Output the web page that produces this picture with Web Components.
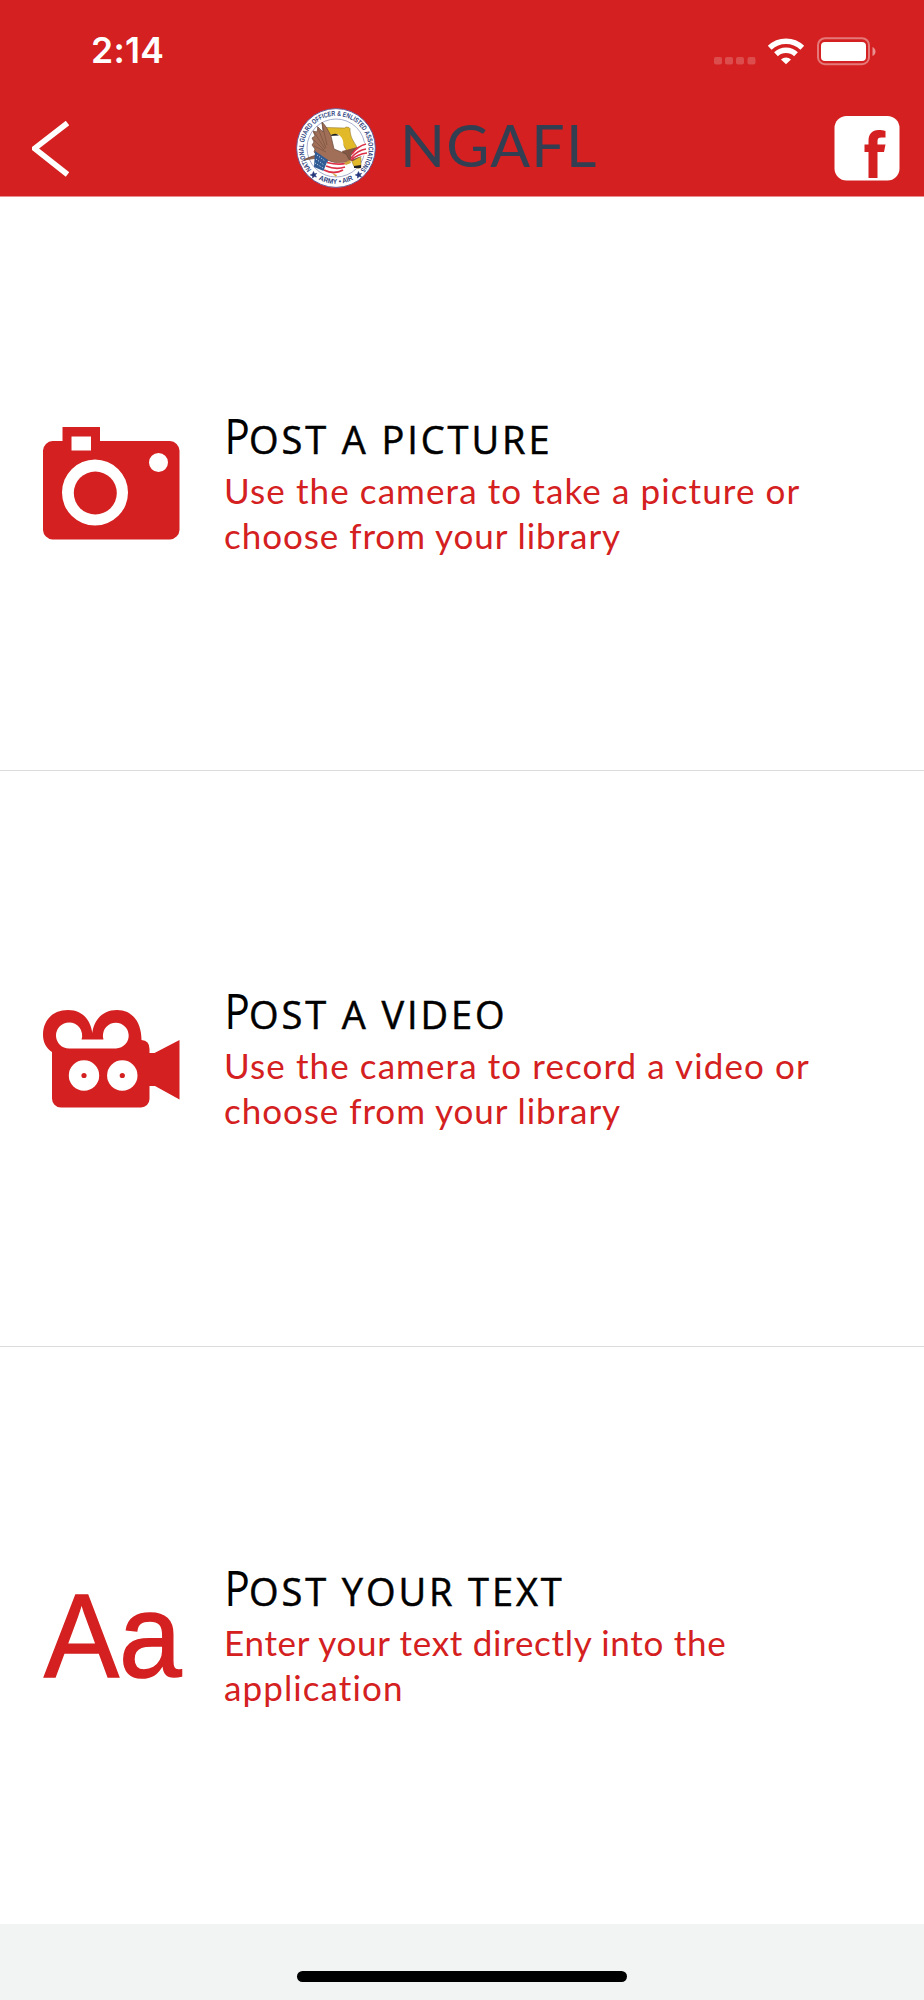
<!DOCTYPE html>
<html lang="en">
<head>
<meta charset="utf-8">
<title>NGAFL</title>
<style>
    body {
        margin: 0;
        background: #fff;
    }
</style>
</head>
<body>
<post-screen></post-screen>

<script>
const RED = '#d42020';

class BaseElement extends HTMLElement {
    connectedCallback() {
        this.root = this.attachShadow({ mode: 'open' });
        this.root.innerHTML = this.constructor.template;
    }
}

class StatusBar extends BaseElement {
    static get tagName() {
        return 'status-bar';
    }

    static get template() {
        return `
<style>
    :host {
        display: flex;
        justify-content: space-between;
        align-items: center;
        height: 101px;
        padding: 0 48px 0 91px;
        box-sizing: border-box;
        color: #fff;
        font: 600 35.500px/40px Inter, 'Liberation Sans', sans-serif;
        letter-spacing: .3px;
    }
    svg {
        display: block;
    }
</style>
<span>2:14</span>
<svg width="164" height="30" viewBox="712 35 164 30" fill="#fff">
    <g opacity=".2">
        <rect x="714" y="56" width="8" height="7.5" rx="2"/>
        <rect x="725" y="56" width="8" height="7.5" rx="2"/>
        <rect x="736" y="56" width="8" height="7.5" rx="2"/>
        <rect x="747.5" y="56" width="8" height="7.5" rx="2"/>
    </g>
    <g fill="none" stroke="#fff" stroke-width="5.4">
        <path d="M769.7 46.800a23.400 23.400 0 0 1 32.600 0"/>
        <path d="M776 53.300a14.500 14.500 0 0 1 20 0"/>
    </g>
    <path d="M781 58.500a7.600 7.600 0 0 1 10 0l-5 4.800z"/>
    <rect x="818" y="37.200" width="51" height="26" rx="7" fill="none" stroke="#fff" stroke-width="2" opacity=".4"/>
    <rect x="821" y="41" width="45" height="19" rx="4"/>
    <path d="M872.500 46q3 1.500 3 4.500t-3 4.500z" opacity=".5"/>
</svg>
`;
    }
}

class GuardSeal extends BaseElement {
    static get tagName() {
        return 'guard-seal';
    }

    static get template() {
        return `
<style>
    :host {
        display: block;
        width: 80px;
        height: 80px;
    }
    svg {
        display: block;
    }
    text {
        font-family: 'Liberation Sans Narrow', 'Liberation Sans', sans-serif;
        font-weight: bold;
        font-size: 7px;
        fill: #2e3f80;
    }
</style>
<svg width="80" height="80" viewBox="0 0 80 80">
    <defs>
        <path id="top" d="M15.600 61.500A32.400 32.400 0 1 1 65 61"/>
        <path id="bottom" d="M16 67A36.800 36.800 0 0 0 64 67"/>
    </defs>
    <circle cx="40" cy="40" r="39.400" fill="#fff" stroke="#6a5a96" stroke-width="1"/>
    <circle cx="40" cy="40" r="29" fill="#fff" stroke="#9098c0" stroke-width=".8"/>
    <text><textPath href="#top" textLength="148" lengthAdjust="spacingAndGlyphs">NATIONAL GUARD OFFICER &amp; ENLISTED ASSOCIATIONS</textPath></text>
    <text><textPath href="#bottom" startOffset="50%" text-anchor="middle" textLength="36" lengthAdjust="spacingAndGlyphs">ARMY • AIR</textPath></text>
    <path d="M29 20.500l1.500-1 18 .5 1.500-1 3 .5 1 1c0 8 3 12 6 17l5 13v9l-3 1-4-2-5-12-6-10-5-8-11-3z" fill="#e2b929" stroke="#806a28" stroke-width=".5"/>
    <path d="M36 28c4-5 10 0 11 5l1 9-6 5-6-10z" fill="#fff"/>
    <path d="M34 28q5-4 9-.5l-5 .3z" fill="#222"/>
    <path d="M46 43l8-2 15-4 1 9-13 7-8-1z" fill="#815643"/>
    <path d="M26 14c4 4 6 8 9 14l3 13 12 5 4 7-11 3-12-4-9-2-14 2c5-3 9-4 13-5l-3-3 1-3-3-4 2-3-2-4 3-2-2-5 4 1 1-5 5 5z" fill="#a16f57" stroke="#67483b" stroke-width=".7"/>
    <path d="M26 15l5 22M21 18l9 22M18 24l11 17M18 32l10 10M18 38l12 6M9 51l16-4" stroke="#765041" stroke-width=".7" fill="none"/>
    <path d="M19 43l13 9-2 12-12-5z" fill="#305b94"/>
    <path d="M21 47l8 6M20 51l8 6M19 55l8 5" stroke="#d9e6f4" stroke-width="1" stroke-dasharray="1 1.700"/>
    <path d="M31 54q12 2 21 0l-4 9q-11 5-21 1z" fill="#fff"/>
    <path d="M31 54.500q12 3 20 .5M30 58q10 4 19 1M28 62q10 5 19 0" stroke="#dc3047" stroke-width="1.800" fill="none"/>
    <path d="M55 48q6-10 15-14l1 13q-7 1-16 5z" fill="#fff"/>
    <path d="M56 46q6-8 14-10M55 50q7-8 15-9M55 52q7-6 16-7" stroke="#dc3047" stroke-width="1.700" fill="none"/>
    <path d="M36 65l5 2-1 2zM48 55l6-3 1 3-5 2z" fill="#d0a63a"/>
    <path d="M58 58l7-1v3h-7z" fill="#222"/>
    <path id="star" d="M17.500 63.500l1 2.200 2.300-.4-1.500 1.800 1.200 2-2.300-.6-1.600 1.700-.2-2.300-2.200-1 2.200-.9z" fill="#26387c" stroke="#26387c" stroke-width=".5"/>
    <use href="#star" x="45"/>
</svg>
`;
    }
}

class NavBar extends BaseElement {
    static get tagName() {
        return 'nav-bar';
    }

    static get template() {
        return `
<style>
    :host {
        display: flex;
        align-items: flex-start;
        height: 95px;
        padding: 7px 24px 0 32px;
        box-sizing: border-box;
    }
    svg {
        display: block;
    }
    .back {
        margin-top: 13px;
    }
    .brand {
        display: flex;
        flex: 1;
        gap: 24px;
        margin-left: 227px;
    }
    .name {
        margin-top: 2px;
        white-space: nowrap;
        color: #323e52;
        font: 400 59px/70px Lato, sans-serif;
        letter-spacing: 1.200px;
    }
    .share {
        margin-top: 8px;
    }
</style>
<svg class="back" width="37" height="56" viewBox="0 0 37 56">
    <path d="M35.500 2L2.500 27.500l33 26" fill="none" stroke="#fff" stroke-width="5.600"/>
</svg>
<div class="brand">
    <guard-seal></guard-seal>
    <span class="name">NGAFL</span>
</div>
<svg class="share" width="66" height="65" viewBox="0 0 66 65">
    <rect x=".5" width="65" height="64.500" rx="12" fill="#fff"/>
    <path d="M34.500 62V36h-4v-7.500h4V25c0-7 3.500-11 10-11 2.500 0 5 .3 7 1v6.500h-4c-3 0-4 1-4 3.500v3.500h8L50 36h-6.500v26z" fill="${RED}"/>
</svg>
`;
    }
}

class PostOption extends BaseElement {
    static get tagName() {
        return 'post-option';
    }

    static get template() {
        return `
<style>
    :host {
        display: flex;
        align-items: center;
        padding-left: 43px;
        box-sizing: border-box;
    }
    .icon {
        width: 137px;
        margin-right: 44px;
    }
    .title {
        margin-bottom: 4px;
        white-space: nowrap;
        color: #000;
        font: 400 49px/50px 'Open Sans', sans-serif;
    }
    .text {
        white-space: nowrap;
        color: ${RED};
        font: 400 35px/44.700px Lato, sans-serif;
        letter-spacing: 1.1px;
    }
</style>
<div class="icon"><slot name="icon"></slot></div>
<div>
    <div class="title"><slot name="title"></slot></div>
    <div class="text"><slot></slot></div>
</div>
`;
    }
}

class HomeIndicator extends BaseElement {
    static get tagName() {
        return 'home-indicator';
    }

    static get template() {
        return `
<style>
    :host {
        display: flex;
        justify-content: center;
        height: 76px;
        padding-top: 47px;
        box-sizing: border-box;
        background: #f2f4f4;
    }
    div {
        width: 330px;
        height: 11px;
        border-radius: 6px;
        background: #000;
    }
</style>
<div></div>
`;
    }
}

class PostScreen extends BaseElement {
    static get tagName() {
        return 'post-screen';
    }

    static get template() {
        return `
<style>
    :host {
        display: flex;
        flex-direction: column;
        width: 924px;
        height: 2000px;
    }
    header {
        height: 196px;
        background: ${RED};
        border-bottom: 1px solid #ea8f8f;
    }
    main {
        display: flex;
        flex-direction: column;
        flex: 1;
    }
    post-option {
        height: 573px;
    }
    post-option + post-option {
        height: 576px;
        padding-top: 1px;
        border-top: 1px solid #dcdcdc;
    }
    post-option:last-child {
        flex: 1;
    }
    svg {
        display: block;
    }
    .initial {
        display: inline-block;
        width: 25px;
        transform: scaleX(.86);
        transform-origin: 3px 50%;
    }
    .caps {
        font-size: 38px;
        letter-spacing: 2.900px;
        -webkit-text-stroke: .5px #000;
    }
    .tight {
        letter-spacing: .7px;
    }
    .snug {
        letter-spacing: .95px;
    }
</style>
<header>
    <status-bar></status-bar>
    <nav-bar></nav-bar>
</header>
<main>
    <post-option>
        <svg slot="icon" width="137" height="113" viewBox="0 0 137 113" fill="${RED}">
            <path fill-rule="evenodd" d="M19.500 0H57v14h70a10 10 0 0 1 9.500 9.500v79.500a10 10 0 0 1-9.500 9.500H9.500A10 10 0 0 1 0 103V23.500A10 10 0 0 1 9.500 14h10zM28.500 9.500V23.500H48V9.500zM85 65.500a33 33 0 1 0-66 0a33 33 0 1 0 66 0zM125 35.500a9.500 9.500 0 1 0-19 0a9.500 9.500 0 1 0 19 0z"/>
            <circle cx="52.300" cy="66" r="21.500"/>
        </svg>
        <span slot="title"><span class="initial">P</span><span class="caps">OST A PICTURE</span></span>
        Use the camera to take a picture or<br><span class="snug">choose from your library</span>
    </post-option>
    <post-option>
        <svg slot="icon" width="137" height="98" viewBox="0 0 137 98" fill="${RED}">
            <path d="M9 42C3 38 0 32 0 25C0 10 10 0 25 0C41 0 48 12 49.300 23C50.500 12 58 0 74 0C90 0 98.500 13 98.500 30q8 .5 8 9v4h5L136.500 30v59.500L112 76h-5.500v13a8.500 8.500 0 0 1-8.500 8.500H18A9 9 0 0 1 9 88z"/>
            <g fill="#fff">
                <path d="M26 12.500a12.900 12.900 0 0 0 0 26H73a12.900 12.900 0 1 0-12.500-9H38.500a12.900 12.900 0 0 0-12.500-17z"/>
                <circle cx="41" cy="65.500" r="15.200"/>
                <circle cx="79.300" cy="65.500" r="15.200"/>
            </g>
            <circle cx="41" cy="65.500" r="2.600"/>
            <circle cx="79.300" cy="65.500" r="2.600"/>
        </svg>
        <span slot="title"><span class="initial">P</span><span class="caps">OST A VIDEO</span></span>
        Use the camera to record a video or<br><span class="snug">choose from your library</span>
    </post-option>
    <post-option>
        <svg slot="icon" width="144" height="137" viewBox="0 0 144 137" fill="${RED}">
            <text transform="translate(1 109) scale(.945 1)" font-family="Liberation Sans" font-size="119" stroke="${RED}" stroke-width="1.500">Aa</text>
        </svg>
        <span slot="title"><span class="initial">P</span><span class="caps">OST YOUR TEXT</span></span>
        <span class="tight">Enter your text directly into the</span><br>application
    </post-option>
</main>
<home-indicator></home-indicator>
`;
    }
}

[StatusBar, GuardSeal, NavBar, PostOption, HomeIndicator, PostScreen].forEach(element => {
    customElements.define(element.tagName, element);
});
</script>
</body>
</html>
